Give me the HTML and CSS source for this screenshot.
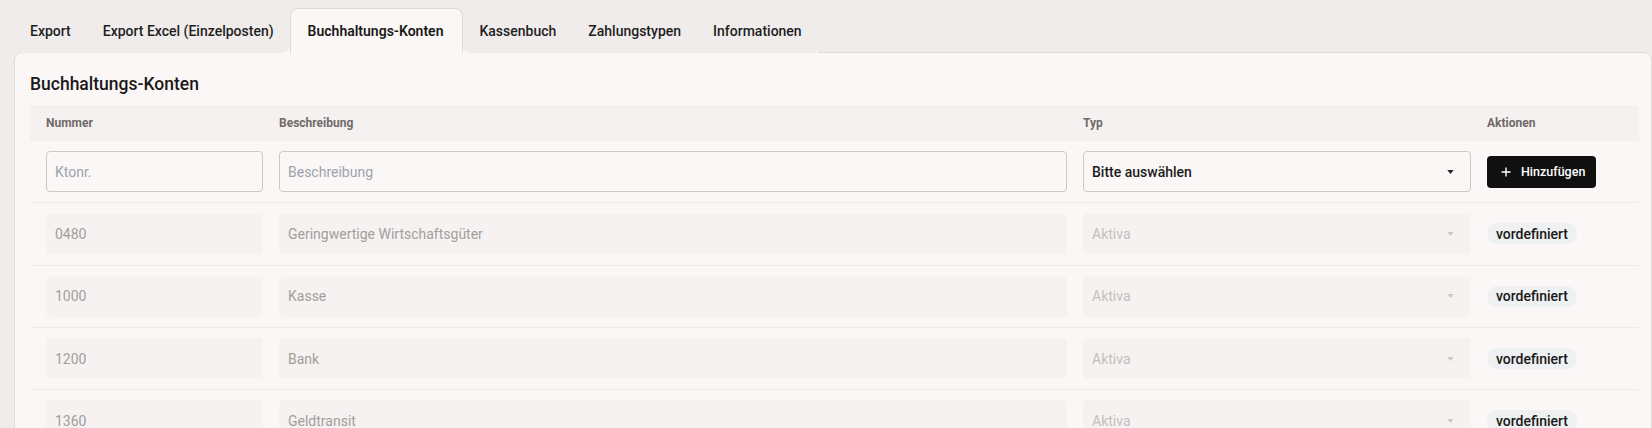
FILE: index.html
```html
<!DOCTYPE html>
<html lang="de">
<head>
<meta charset="utf-8">
<title>Buchhaltungs-Konten</title>
<link rel="stylesheet" href="styles.css">
</head>
<body>
<div class="page">
  <nav class="tabs">
    <div class="tab">Export</div>
    <div class="tab before-active">Export Excel (Einzelposten)</div>
    <div class="tab active">Buchhaltungs-Konten</div>
    <div class="tab after-active">Kassenbuch</div>
    <div class="tab">Zahlungstypen</div>
    <div class="tab last">Informationen</div>
  </nav>

  <section class="card">
    <h2 class="card-title">Buchhaltungs-Konten</h2>

    <div class="table">
      <div class="row head">
        <div class="th">Nummer</div>
        <div class="th">Beschreibung</div>
        <div class="th">Typ</div>
        <div class="th">Aktionen</div>
      </div>

      <div class="row">
        <input class="field" type="text" placeholder="Ktonr.">
        <input class="field" type="text" placeholder="Beschreibung">
        <div class="select">
          <span>Bitte auswählen</span>
          <svg class="caret" width="8" height="5" viewBox="0 0 8 5"><path d="M0 0h8L4 5z"/></svg>
        </div>
        <div class="actions">
          <button class="btn-add" type="button">
            <svg width="10" height="10" viewBox="0 0 10 10"><path d="M5 0.5v9M0.5 5h9" stroke="#fff" stroke-width="1.4"/></svg>
            <span>Hinzufügen</span>
          </button>
        </div>
      </div>

      <div class="row">
        <div class="field disabled">0480</div>
        <div class="field disabled">Geringwertige Wirtschaftsgüter</div>
        <div class="select disabled"><span>Aktiva</span><svg class="caret" width="8" height="5" viewBox="0 0 8 5"><path d="M0 0h8L4 5z"/></svg></div>
        <div class="actions"><span class="badge">vordefiniert</span></div>
      </div>

      <div class="row">
        <div class="field disabled">1000</div>
        <div class="field disabled">Kasse</div>
        <div class="select disabled"><span>Aktiva</span><svg class="caret" width="8" height="5" viewBox="0 0 8 5"><path d="M0 0h8L4 5z"/></svg></div>
        <div class="actions"><span class="badge">vordefiniert</span></div>
      </div>

      <div class="row">
        <div class="field disabled">1200</div>
        <div class="field disabled">Bank</div>
        <div class="select disabled"><span>Aktiva</span><svg class="caret" width="8" height="5" viewBox="0 0 8 5"><path d="M0 0h8L4 5z"/></svg></div>
        <div class="actions"><span class="badge">vordefiniert</span></div>
      </div>

      <div class="row">
        <div class="field disabled">1360</div>
        <div class="field disabled">Geldtransit</div>
        <div class="select disabled"><span>Aktiva</span><svg class="caret" width="8" height="5" viewBox="0 0 8 5"><path d="M0 0h8L4 5z"/></svg></div>
        <div class="actions"><span class="badge">vordefiniert</span></div>
      </div>
    </div>
  </section>
</div>
</body>
</html>
```

FILE: styles.css
```css
* {
  box-sizing: border-box;
}

html, body {
  margin: 0;
  padding: 0;
}

body {
  background: #efeceb;
  font-family: Roboto, "Liberation Sans", Arial, sans-serif;
  color: #1c1b1b;
  overflow: hidden;
}

.page {
  padding: 8px 0 0 14px;
}

/* Tab strip */
.tabs {
  display: flex;
  height: 45px;
  margin-bottom: -1px;
  position: relative;
  z-index: 1;
  width: max-content;
  background: linear-gradient(to bottom, #efeceb 50%, #faf7f6 50%);
}

.tab {
  display: flex;
  align-items: center;
  padding: 0 16px;
  font-size: 14px;
  font-weight: 500;
  color: #1f1e1e;
  background: #efeceb;
  white-space: nowrap;
}

.tab.before-active {
  border-bottom-right-radius: 8px;
}

.tab.after-active {
  border-bottom-left-radius: 8px;
}

.tab.last {
  border-bottom-right-radius: 4px;
}

.tab.active {
  background: #faf7f6;
  border: 1px solid #dedad9;
  border-bottom: none;
  border-radius: 8px 8px 0 0;
  font-weight: 600;
  padding: 0 19px 0 17px;
  color: #1a1919;
}

/* Card */
.card {
  background: #faf7f6;
  border: 1px solid #e0dcdb;
  border-radius: 8px 8px 0 0;
  padding: 0 12px 0 15px;
  min-height: 500px;
}

.card-title {
  margin: 0;
  padding-top: 21px;
  font-size: 17.5px;
  font-weight: 500;
  line-height: 20px;
  color: #1a1919;
  margin-bottom: 11px;
}

/* Table */
.row {
  display: grid;
  grid-template-columns: 217px 788px 388px 1fr;
  column-gap: 16px;
  padding: 10px 16px;
  border-bottom: 1px solid #efe9e8;
  align-items: center;
}

.row.head {
  height: 36px;
  padding: 0 16px;
  background: #f5f1f0;
  border-bottom: none;
}

.th {
  font-size: 12px;
  font-weight: 700;
  color: #6f6a69;
}

.field,
.select {
  height: 41.33px;
  border: 1px solid #cdc8c7;
  border-radius: 4px;
  background: #faf7f6;
  font-family: inherit;
  font-size: 14px;
  padding: 0 8px;
  color: #1c1b1b;
  outline: none;
  display: flex;
  align-items: center;
  width: 100%;
}

.field::placeholder {
  color: #9da3ad;
}

.select {
  justify-content: space-between;
  font-weight: 500;
  padding-right: 16px;
}

.caret {
  fill: #222;
  width: 7px;
  height: 4px;
}

.field.disabled,
.select.disabled {
  background: #f5f2f1;
  border-color: #f5f2f1;
  color: #a39e9c;
  font-weight: 400;
}

.select.disabled {
  color: #c4bfbd;
}

.select.disabled .caret {
  fill: #cbc7c6;
}

.actions {
  display: flex;
  align-items: center;
}

.btn-add {
  display: inline-flex;
  align-items: center;
  gap: 10px;
  height: 32px;
  padding: 0 11px 0 14px;
  background: #111010;
  color: #fff;
  border: none;
  border-radius: 4px;
  font-family: inherit;
  font-size: 12.5px;
  font-weight: 500;
}

.badge {
  display: inline-flex;
  align-items: center;
  height: 21px;
  padding: 0 9px;
  border-radius: 999px;
  background: #eff0f1;
  font-size: 14px;
  font-weight: 500;
  color: #1a1919;
}
```
